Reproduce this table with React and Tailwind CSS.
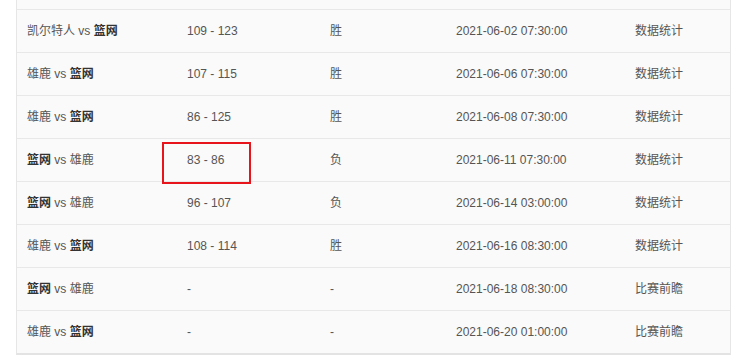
import React from "react";

const rows = [
  { a: "凯尔特人", b: "篮网", boldA: false, score: "109 - 123", r: "胜", t: "2021-06-02 07:30:00", l: "数据统计" },
  { a: "雄鹿", b: "篮网", boldA: false, score: "107 - 115", r: "胜", t: "2021-06-06 07:30:00", l: "数据统计" },
  { a: "雄鹿", b: "篮网", boldA: false, score: "86 - 125", r: "胜", t: "2021-06-08 07:30:00", l: "数据统计" },
  { a: "篮网", b: "雄鹿", boldA: true, score: "83 - 86", r: "负", t: "2021-06-11 07:30:00", l: "数据统计" },
  { a: "篮网", b: "雄鹿", boldA: true, score: "96 - 107", r: "负", t: "2021-06-14 03:00:00", l: "数据统计" },
  { a: "雄鹿", b: "篮网", boldA: false, score: "108 - 114", r: "胜", t: "2021-06-16 08:30:00", l: "数据统计" },
  { a: "篮网", b: "雄鹿", boldA: true, score: "-", r: "-", t: "2021-06-18 08:30:00", l: "比赛前瞻" },
  { a: "雄鹿", b: "篮网", boldA: false, score: "-", r: "-", t: "2021-06-20 01:00:00", l: "比赛前瞻" },
];

export default function App() {
  return (
    <div
      className="w-[739px] h-[362px] bg-white overflow-hidden relative text-[12px] text-[#555]"
      style={{ fontFamily: '"Liberation Sans", Arial, "Noto Sans CJK SC", sans-serif' }}
    >
      <div className="ml-[16px] w-[715px] bg-[#fafafa] border-l border-r border-[#e6e6e6] border-b-2 border-b-[#e3e3e3]">
        <div className="h-[9px]" />
        {rows.map((row, i) => (
          <div key={i} className="flex h-[43px] items-center border-t border-[#e8e8e8]">
            <div className="w-[160px] pl-[10px]">
              {row.boldA ? (
                <>
                  <b className="font-bold text-[#333]">{row.a}</b> vs {row.b}
                </>
              ) : (
                <>
                  {row.a} vs <b className="font-bold text-[#333]">{row.b}</b>
                </>
              )}
            </div>
            <div className="w-[143px] pl-[10px]">{row.score}</div>
            <div className="w-[126px] pl-[10px]">{row.r}</div>
            <div className="w-[179px] pl-[10px]">{row.t}</div>
            <div className="flex-1 pl-[10px]">{row.l}</div>
          </div>
        ))}
      </div>
      <div className="absolute left-[162px] top-[142px] w-[89px] h-[42px] border-2 border-[#e8141b]" />
    </div>
  );
}
